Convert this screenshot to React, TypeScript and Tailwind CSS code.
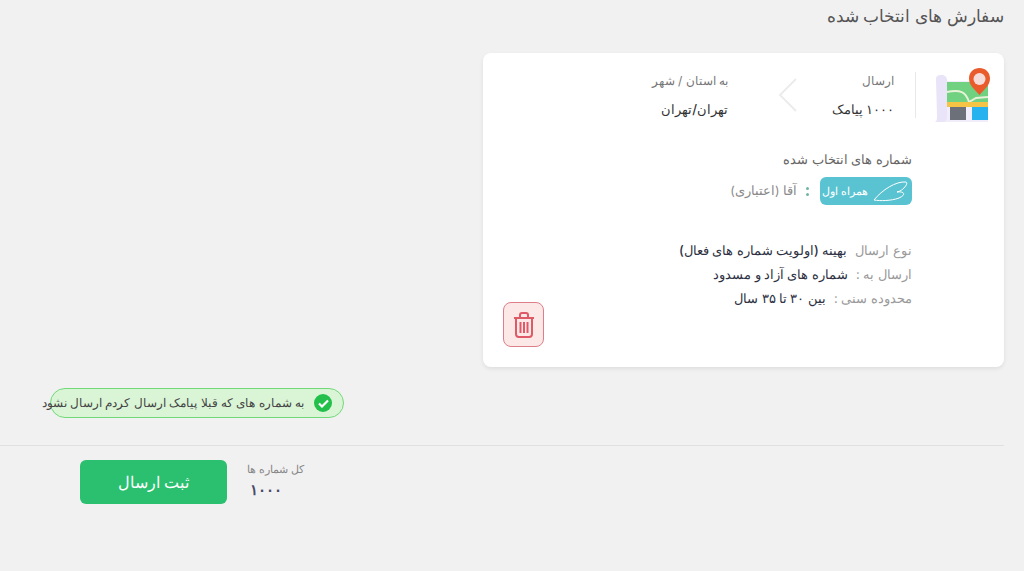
const fa = "font-['Inter',sans-serif]";

function MapIcon() {
  return (
    <svg width="56" height="56" viewBox="0 0 56 56" className="shrink-0">
      <rect x="8" y="14" width="46" height="41" fill="#f1edfb" />
      <rect x="13" y="15" width="41" height="20" fill="#70d180" />
      <path d="M13 25 C26 22 32 25 35 35 L42 31 L54 30" fill="none" stroke="#e8f2d8" strokeWidth="2" />
      <rect x="13" y="35" width="41" height="5" fill="#f6c445" />
      <rect x="16" y="40" width="16" height="13" fill="#6c7078" />
      <rect x="38" y="40" width="16" height="13" fill="#25b2ee" />
      <path d="M2 12 C2 9 4 8 7 8 C11 8 13 10 13 13 L13 50 C13 53 11 55 8 55 L1 55 C3 54 3 52 3 49 Z" fill="#e9e4f7" />
      <path d="M45.5 28 C40 22 35 18 35 11.5 C35 5 40 1 45.5 1 C51 1 56 5 56 11.5 C56 18 51 22 45.5 28 Z" fill="#ea5b2c" />
      <circle cx="45.5" cy="12" r="6" fill="#f6dcd8" />
    </svg>
  );
}

function TrashIcon() {
  return (
    <svg width="22" height="26" viewBox="0 0 22 26" fill="none" stroke="#dd5a66" strokeWidth="2">
      <path d="M1 6 H21" />
      <path d="M7 5 V3 C7 2 8 1 9 1 H13 C14 1 15 2 15 3 V5" />
      <path d="M3 6 V22 C3 24 4 25 6 25 H16 C18 25 19 24 19 22 V6" />
      <path d="M7.5 10 V21 M11 10 V21 M14.5 10 V21" />
    </svg>
  );
}

function DetailRow({ label, value }: { label: string; value: string }) {
  return (
    <div className="flex h-6 items-center gap-2 whitespace-nowrap text-[13px] leading-6">
      <span className="text-[#9a9a9a]">{label}</span>
      <span className="font-medium text-[#2d3142]">{value}</span>
    </div>
  );
}

export default function App() {
  return (
    <div dir="rtl" className={`${fa} flex h-[571px] w-[1024px] flex-col overflow-hidden bg-[#f1f1f1]`}>
      <h1 className="mr-5 h-[53px] pt-[5px] text-[17px] font-normal leading-[22px] text-[#555]">سفارش های انتخاب شده</h1>

      <div className="mr-5 flex w-[521px] flex-col self-start rounded-lg bg-white pb-5 pl-5 pr-[14px] pt-[14px] shadow-[0_2px_4px_rgba(0,0,0,0.08)]">
        <div className="flex h-[56px] items-center">
          <MapIcon />
          <div className="mr-[18px] h-[46px] w-px bg-[#e8e8e8]" />
          <div className="mr-[21px] w-[56px]">
            <div className="text-[12px] leading-6 text-[#777]">ارسال</div>
            <div className="whitespace-nowrap pt-1 text-[13px] font-medium leading-6 text-[#333]">۱۰۰۰ پیامک</div>
          </div>
          <svg width="20" height="34" viewBox="0 0 20 34" fill="none" stroke="#ececec" strokeWidth="2" className="mr-[40px]">
            <path d="M18 1 L2 17 L18 33" />
          </svg>
          <div className="mr-[50px]">
            <div className="text-[12px] leading-6 text-[#777]">به استان / شهر</div>
            <div className="pt-1 text-[13px] font-medium leading-6 text-[#333]">تهران/تهران</div>
          </div>
        </div>

        <div className="mt-6 flex justify-between pr-[78px]">
          <div>
            <div className="text-[13px] leading-6 text-[#666]">شماره های انتخاب شده</div>
            <div className="mt-[6px] flex h-7 items-center">
              <div className="flex h-7 w-[92px] items-center justify-center gap-1 rounded-md bg-[#5ac3d2] text-white">
                <svg width="38" height="22" viewBox="0 0 38 22" fill="none" stroke="#fff" strokeWidth="1">
                  <path d="M2 20 C10 10 24 1 34 2 C37 3 31 11 25 12 C33 11 34 15 27 18 C19 21 8 21 2 20 Z" />
                </svg>
                <span className="text-[11px] leading-none">همراه اول</span>
              </div>
              <span className="mr-[11px] flex flex-col gap-[3px]">
                <span className="h-[3px] w-[3px] rounded-full bg-[#6fb7a5]" />
                <span className="h-[3px] w-[3px] rounded-full bg-[#6fb7a5]" />
              </span>
              <span className="mr-[9px] whitespace-nowrap text-[12.5px] text-[#8a8a8a]">آقا (اعتباری)</span>
            </div>
            <div className="mt-[33px]">
              <DetailRow label="نوع ارسال" value="بهینه (اولویت شماره های فعال)" />
              <DetailRow label="ارسال به :" value="شماره های آزاد و مسدود" />
              <DetailRow label="محدوده سنی :" value="بین ۳۰ تا ۳۵ سال" />
            </div>
          </div>
          <button className="mt-[155px] flex h-[45px] w-[41px] items-center justify-center rounded-lg border border-[#dd7f88] bg-[#fde8e8]">
            <TrashIcon />
          </button>
        </div>
      </div>

      <div className="ml-[680px] mr-[680px] mt-[21px] hidden" />
      <div className="mr-auto ml-[50px] mt-[21px] flex h-[30px] w-[294px] items-center rounded-full border border-[#72d97a] bg-[#d9f5d6] pr-[11px]">
        <span className="flex h-[18px] w-[18px] shrink-0 items-center justify-center rounded-full bg-[#22c04a]">
          <svg width="11" height="9" viewBox="0 0 11 9" fill="none" stroke="#fff" strokeWidth="2.2"><path d="M1 4.5 L4 7.5 L10 1.5" /></svg>
        </span>
        <span className="mr-[10px] whitespace-nowrap text-[12px] text-[#444]">به شماره های که قبلا پیامک ارسال کردم ارسال نشود</span>
      </div>

      <div className="mr-5 mt-[27px] h-px w-[1004px] bg-[#e0e0e0]" />

      <div className="mr-5 flex w-[1004px] items-start justify-end pl-[80px] pt-[14px]">
        <div className="ml-[23px] w-[54px]">
          <div className="whitespace-nowrap text-[10.5px] leading-5 text-[#888]">کل شماره ها</div>
          <div className="text-left text-[15px] font-bold leading-5 text-[#4a4a68]">۱۰۰۰</div>
        </div>
        <button className="h-[44px] w-[147px] rounded-md bg-[#2bc06f] text-[16px] font-medium text-white">ثبت ارسال</button>
      </div>
    </div>
  );
}
